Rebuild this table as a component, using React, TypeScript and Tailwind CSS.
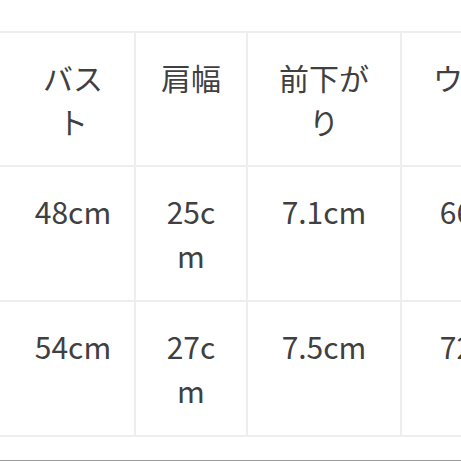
const rows: string[][] = [
  ["", "バスト", "肩幅", "前下がり", "ウエスト"],
  ["", "48cm", "25cm", "7.1cm", "66cm"],
  ["", "54cm", "27cm", "7.5cm", "72cm"],
];

export default function App() {
  return (
    <div
      className="h-[461px] w-[461px] overflow-hidden bg-white text-[#404040]"
      style={{ fontFamily: '"Noto Sans CJK JP", "Noto Sans", sans-serif' }}
    >
      <div className="h-[31px]" />
      <div className="grid w-max grid-cols-[10px_122px_110px_152px_152px] gap-[2px] bg-[#eeeeee] py-[2px]">
        {rows.map((row, r) =>
          row.map((cell, c) => (
            <div
              key={`${r}-${c}`}
              className={
                r === 0
                  ? "h-[132px] bg-white px-5 pt-[22px] text-center text-[30px] font-normal leading-[44px] break-all"
                  : "h-[133px] bg-white px-5 pt-[22px] text-center text-[30px] font-normal leading-[44px] break-all"
              }
            >
              {cell}
            </div>
          )),
        )}
      </div>
      <div className="h-[23px]" />
      <div className="h-px bg-[#9a9a9a]" />
    </div>
  );
}
